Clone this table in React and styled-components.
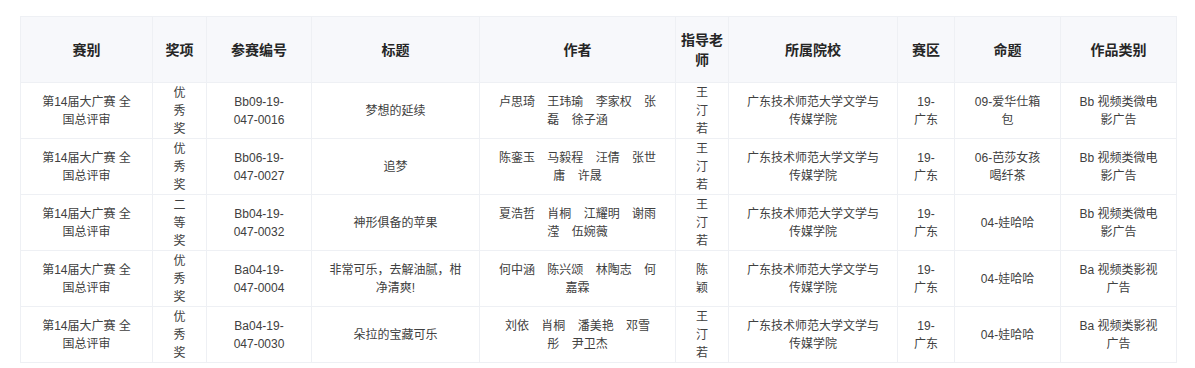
import React from 'react';
import styled, { createGlobalStyle } from 'styled-components';

const GlobalStyle = createGlobalStyle`
  body {
    margin: 0;
    background: #ffffff;
    font-family: "Liberation Sans", "Noto Sans CJK SC", sans-serif;
  }
`;

const COLUMNS = [
  { key: 'contest', title: '赛别', width: 132 },
  { key: 'award', title: '奖项', width: 54 },
  { key: 'code', title: '参赛编号', width: 105 },
  { key: 'title', title: '标题', width: 168 },
  { key: 'authors', title: '作者', width: 196 },
  { key: 'teacher', title: '指导老师', width: 53 },
  { key: 'school', title: '所属院校', width: 169 },
  { key: 'region', title: '赛区', width: 57 },
  { key: 'topic', title: '命题', width: 106 },
  { key: 'category', title: '作品类别', width: 116 },
];

const ROWS = [
  {
    contest: '第14届大广赛 全国总评审',
    award: '优秀奖',
    code: 'Bb09-19-047-0016',
    title: '梦想的延续',
    authors: '卢思琦 王玮瑜 李家权 张磊 徐子涵',
    teacher: '王汀若',
    school: '广东技术师范大学文学与传媒学院',
    region: '19-广东',
    topic: '09-爱华仕箱包',
    category: 'Bb 视频类微电影广告',
  },
  {
    contest: '第14届大广赛 全国总评审',
    award: '优秀奖',
    code: 'Bb06-19-047-0027',
    title: '追梦',
    authors: '陈銮玉 马毅程 汪倩 张世庸 许晟',
    teacher: '王汀若',
    school: '广东技术师范大学文学与传媒学院',
    region: '19-广东',
    topic: '06-芭莎女孩喝纤茶',
    category: 'Bb 视频类微电影广告',
  },
  {
    contest: '第14届大广赛 全国总评审',
    award: '二等奖',
    code: 'Bb04-19-047-0032',
    title: '神形俱备的苹果',
    authors: '夏浩哲 肖桐 江耀明 谢雨滢 伍婉薇',
    teacher: '王汀若',
    school: '广东技术师范大学文学与传媒学院',
    region: '19-广东',
    topic: '04-娃哈哈',
    category: 'Bb 视频类微电影广告',
  },
  {
    contest: '第14届大广赛 全国总评审',
    award: '优秀奖',
    code: 'Ba04-19-047-0004',
    title: '非常可乐，去解油腻，柑净清爽!',
    authors: '何中涵 陈兴颂 林陶志 何嘉霖',
    teacher: '陈颖',
    school: '广东技术师范大学文学与传媒学院',
    region: '19-广东',
    topic: '04-娃哈哈',
    category: 'Ba 视频类影视广告',
  },
  {
    contest: '第14届大广赛 全国总评审',
    award: '优秀奖',
    code: 'Ba04-19-047-0030',
    title: '朵拉的宝藏可乐',
    authors: '刘依 肖桐 潘美艳 邓雪\n彤 尹卫杰',
    teacher: '王汀若',
    school: '广东技术师范大学文学与传媒学院',
    region: '19-广东',
    topic: '04-娃哈哈',
    category: 'Ba 视频类影视广告',
  },
];

const Page = styled.div`
  padding: 16px 19px 0 20px;
`;

const Table = styled.table`
  width: 1156px;
  table-layout: fixed;
  border-collapse: collapse;
  border: 1px solid #eef0f4;
`;

const HeadCell = styled.th`
  height: 65px;
  padding: 0 4px;
  background: #f7f8fb;
  border: 1px solid #eef0f4;
  color: #262626;
  font-size: 14px;
  font-weight: 700;
  line-height: 20px;
  text-align: center;
  vertical-align: middle;
`;

const Cell = styled.td`
  height: 55px;
  padding: 0 16px;
  border: 1px solid #eef0f4;
  color: #404040;
  font-size: 12px;
  line-height: 18px;
  text-align: center;
  vertical-align: middle;
  white-space: pre-line;
  word-spacing: ${(p) => (p.$wide ? '9px' : 'normal')};
`;

export default function App() {
  return (
    <Page>
      <GlobalStyle />
      <Table>
        <colgroup>
          {COLUMNS.map((c) => (
            <col key={c.key} style={{ width: `${c.width}px` }} />
          ))}
        </colgroup>
        <thead>
          <tr>
            {COLUMNS.map((c) => (
              <HeadCell key={c.key}>{c.title}</HeadCell>
            ))}
          </tr>
        </thead>
        <tbody>
          {ROWS.map((row, i) => (
            <tr key={i}>
              {COLUMNS.map((c) => (
                <Cell key={c.key} $wide={c.key === 'authors'}>
                  {row[c.key]}
                </Cell>
              ))}
            </tr>
          ))}
        </tbody>
      </Table>
    </Page>
  );
}
